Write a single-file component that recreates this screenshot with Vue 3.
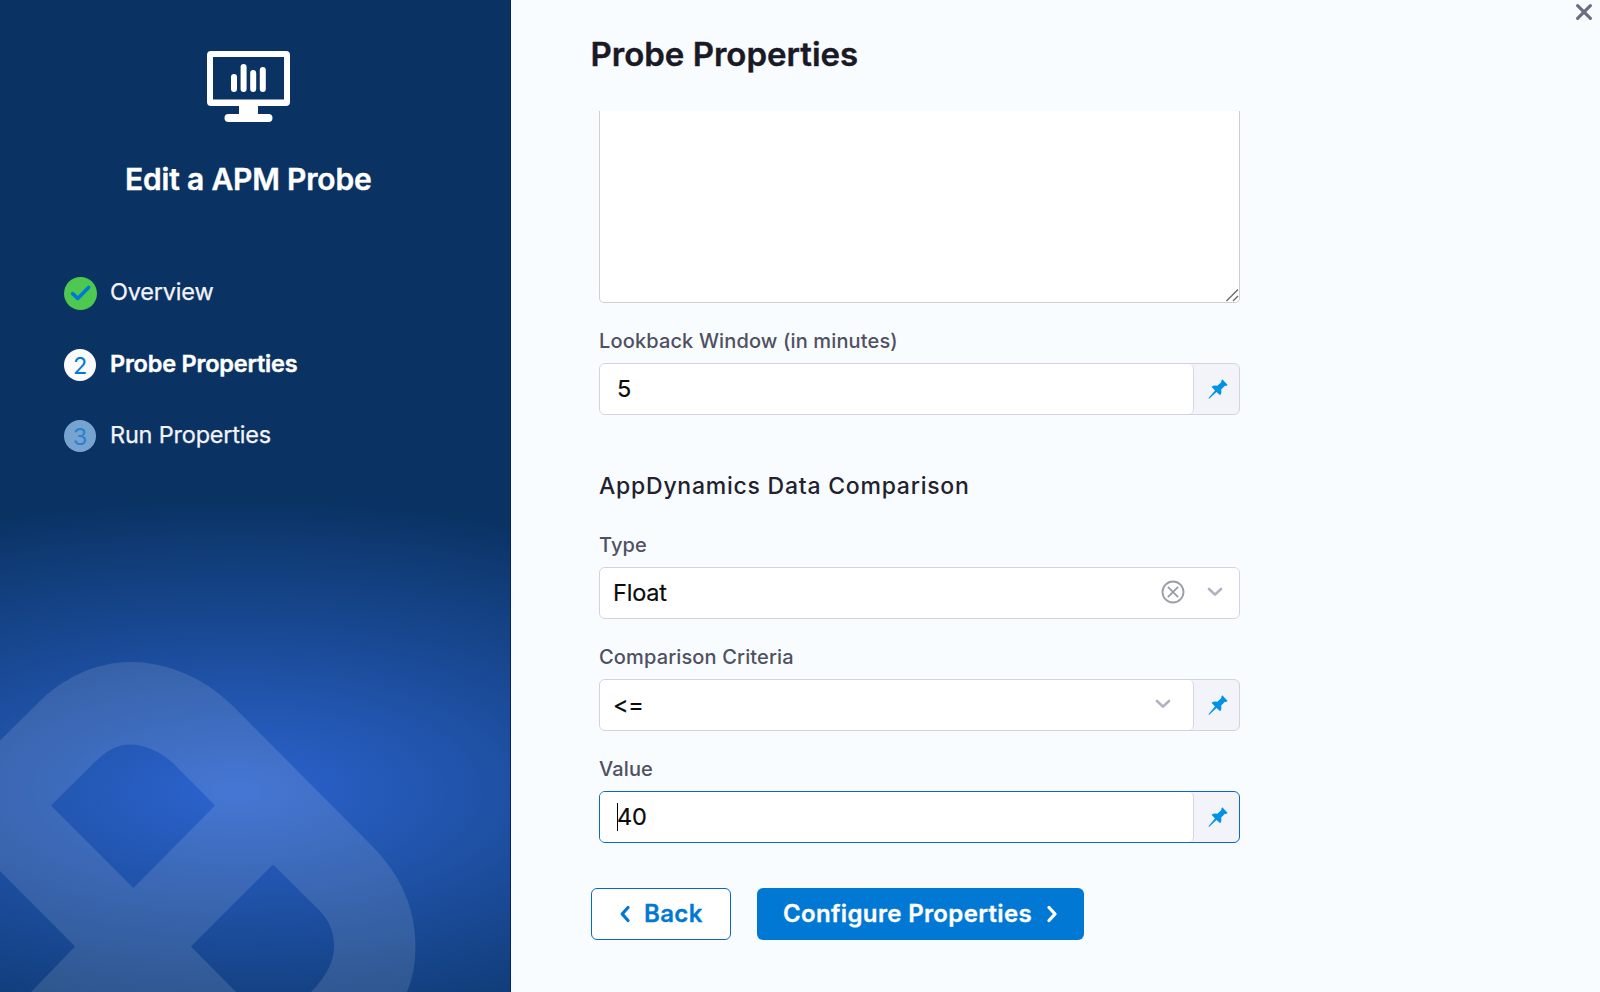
<script setup>
const steps = [
  { n: 1, label: 'Overview', state: 'done' },
  { n: 2, label: 'Probe Properties', state: 'active' },
  { n: 3, label: 'Run Properties', state: 'todo' },
]
const fields = [
  { id: 'lookback', label: 'Lookback Window (in minutes)', value: '5', pin: true },
  { id: 'type', label: 'Type', value: 'Float', select: true, clear: true, heading: 'AppDynamics Data Comparison' },
  { id: 'criteria', label: 'Comparison Criteria', value: '<=', select: true, pin: true },
  { id: 'value', label: 'Value', value: '40', pin: true, focus: true },
]
</script>

<template>
  <div class="dialog">
    <aside class="side">
      <svg class="mark" viewBox="0 0 511 350" width="511" height="350">
        <path
          fill="#fff"
          fill-opacity="0.12"
          fill-rule="evenodd"
          d="M0 98.500L36 63C64 34 98 20 130 20C164 20 201 33 233 64L374 206C402 235 415.500 268 415.500 304Q415.500 330 407 350H311C325 336 334 321 334 304C334 289 329 277 316 265L273 222.500L191 304.500L236 350H31L75 304.500L0 229ZM51 163.500L94 121C106 109 117 102.500 130 102.500C144 102.500 160 109 174 122L215 163.500L133.500 246Z"
        />
      </svg>
      <svg class="monitor" viewBox="0 0 84 72" width="84" height="72" fill="#fff">
        <path fill-rule="evenodd" d="M4 0H79Q83 0 83 4V51Q83 55 79 55H51V63H61.500A4 4 0 0 1 61.500 71H21.500A4 4 0 0 1 21.500 63H32V55H4Q0 55 0 51V4Q0 0 4 0ZM6 6V48.500H77V6Z" />
        <g stroke="#fff" stroke-width="6" stroke-linecap="round">
          <path d="M27 26V38M36.600 16V38M46.200 22V38M55.800 19V38" />
        </g>
      </svg>
      <h2 class="side-title">Edit a APM Probe</h2>
      <ol class="steps">
        <li v-for="s in steps" :key="s.n" :class="['step', s.state]">
          <span class="bullet">
            <svg v-if="s.state === 'done'" viewBox="0 0 33 33" width="33" height="33">
              <path d="M8.600 16.600L13.800 21.400L24.600 10.400" fill="none" stroke="#0278d5" stroke-width="3.600" stroke-linecap="round" stroke-linejoin="round" />
            </svg>
            <template v-else>{{ s.n }}</template>
          </span>
          <span class="step-label">{{ s.label }}</span>
        </li>
      </ol>
    </aside>

    <main class="main">
      <svg class="close" viewBox="0 0 18 18" width="18" height="18">
        <path d="M2.600 2.600L15.400 15.400M15.400 2.600L2.600 15.400" stroke="#6b6d85" stroke-width="3.200" stroke-linecap="round" />
      </svg>
      <h1 class="title">Probe Properties</h1>
      <div class="form">
        <div class="textarea">
          <svg viewBox="0 0 14 14" width="14" height="14">
            <path d="M1.500 13L13 1.500M8 13L13 8" stroke="#666" stroke-width="1.300" />
          </svg>
        </div>
        <template v-for="f in fields" :key="f.id">
          <h3 v-if="f.heading" class="section">{{ f.heading }}</h3>
          <div class="field">
            <div class="label">{{ f.label }}</div>
            <div class="control" :class="{ focus: f.focus }">
              <div class="box" :class="{ select: f.select, pinned: f.pin }">
                <span v-if="f.focus" class="caret"></span>
                <span class="val">{{ f.value }}</span>
                <svg v-if="f.clear" class="clear" viewBox="0 0 24 24" width="24" height="24" fill="none" stroke="#989eab" stroke-width="1.900" stroke-linecap="round">
                  <circle cx="12" cy="12" r="10.500" />
                  <path d="M7.400 7.400L16.600 16.600M16.600 7.400L7.400 16.600" />
                </svg>
                <svg v-if="f.select" class="chev" viewBox="0 0 16 10" width="16" height="10">
                  <path d="M2 2L8 7.600L14 2" fill="none" stroke="#b0b1c3" stroke-width="2.600" stroke-linecap="round" stroke-linejoin="round" />
                </svg>
              </div>
              <div v-if="f.pin" class="pin">
                <svg viewBox="0 0 20 20" width="20" height="20" fill="#0092e4">
                  <path d="M14.300 0.300L19.700 5.900Q18.200 7.200 16.900 6.800L13.200 10.600Q14 13.800 12.200 16.300L8.500 12.900L1.200 19.700L0.400 19.200L7 11.500L3.500 7.800Q6 6 9.300 6.800L13.200 3.200Q12.900 1.600 14.300 0.300Z" />
                </svg>
              </div>
            </div>
          </div>
        </template>
      </div>
      <div class="actions">
        <button class="btn back">
          <svg viewBox="0 0 12 18" width="12" height="18"><path d="M9 2.500L3.200 9L9 15.500" fill="none" stroke="#0278d5" stroke-width="3.300" stroke-linecap="round" stroke-linejoin="round" /></svg>
          <span>Back</span>
        </button>
        <button class="btn next">
          <span>Configure Properties</span>
          <svg viewBox="0 0 12 18" width="12" height="18"><path d="M3 2.500L9 9L3 15.500" fill="none" stroke="#fff" stroke-width="3.300" stroke-linecap="round" stroke-linejoin="round" /></svg>
        </button>
      </div>
    </main>
  </div>
</template>

<style>
body { margin: 0; background: #f9fcff; }
</style>

<style scoped>
* { box-sizing: border-box; }
.dialog {
  display: flex;
  width: 1600px;
  height: 992px;
  overflow: hidden;
  font-family: Inter, "Liberation Sans", sans-serif;
  background: #f9fcff;
}
.side {
  position: relative;
  width: 511px;
  flex: none;
  padding-top: 51px;
  background: radial-gradient(ellipse 670px 291px at 236px 791px, #2c64cf, #0a3364) #0a3364;
  border-right: 1px solid #02236b;
}
.mark { position: absolute; left: 0; bottom: 0; }
.monitor { display: block; margin-left: 207px; }
.side-title {
  margin: 38px 0 0 125px;
  font-size: 30px;
  line-height: 36px;
  font-weight: 600;
  letter-spacing: -0.180px;
  -webkit-text-stroke: 0.400px #fff;
  color: #fff;
  white-space: nowrap;
}
.steps { position: relative; list-style: none; margin: 79px 0 0 64px; padding: 0; }
.step {
  display: flex;
  align-items: center;
  height: 33px;
  margin-bottom: 38.500px;
  color: #f3f3fa;
  font-size: 23.500px;
  letter-spacing: -0.200px;
}
.bullet {
  width: 32px;
  height: 32px;
  margin-top: 1.500px;
  border-radius: 50%;
  display: flex;
  align-items: center;
  justify-content: center;
  background: #fafbfc;
  color: #0278d5;
  padding-top: 1px;
}
.done .bullet { width: 33px; height: 33px; background: #4dc952; padding: 0; }
.todo .bullet { background: #76a3cf; color: #2b80cf; }
.step-label { margin: 0 0 1.500px 14px; white-space: nowrap; -webkit-text-stroke: 0.250px currentColor; }
.done .step-label { margin-left: 13px; }
.active .step-label { font-weight: 600; color: #fff; -webkit-text-stroke-width: 0.400px; }
.main { position: relative; flex: 1; padding: 35px 0 0 79px; }
.close { position: absolute; left: 1063.500px; top: 3px; }
.title {
  margin: 0 0 0 0.500px;
  font-size: 33px;
  line-height: 39px;
  font-weight: 600;
  color: #1a1a26;
  -webkit-text-stroke: 0.400px #1a1a26;
  white-space: nowrap;
}
.form { margin: 37px 0 0 9px; width: 640.500px; }
.textarea {
  height: 192px;
  display: flex;
  justify-content: flex-end;
  align-items: flex-end;
  background: #fff;
  border: 1.500px solid #cfcfd3;
  border-top: 0;
  border-radius: 0 0 5px 5px;
}
.field { padding-top: 24px; }
.section {
  margin: 56px 0 4px;
  font-size: 23px;
  line-height: 31px;
  padding-bottom: 1px;
  font-weight: 500;
  letter-spacing: 0.760px;
  color: #22222f;
  white-space: nowrap;
}
.label { font-size: 20px; line-height: 28px; font-weight: 500; letter-spacing: 0.140px; color: #4f5162; margin-bottom: 8px; white-space: nowrap; }
.control {
  display: flex;
  height: 52px;
  border: 1px solid #d2d2e0;
  border-radius: 6px;
  background: #f3f3fa;
  overflow: hidden;
}
.control.focus { border-color: #0b66cf; }
.box {
  position: relative;
  flex: 1;
  display: flex;
  align-items: center;
  padding-left: 17px;
  background: #fff;
  font-size: 23.500px;
  color: #0b0b0d;
}
.box.select { padding-left: 13px; }
.box.pinned { border-right: 1px solid #d5d6e3; border-radius: 0 5px 5px 0; }
.val { flex: 1; padding-bottom: 2px; white-space: nowrap; letter-spacing: -0.200px; -webkit-text-stroke: 0.200px currentColor; }
.caret { position: absolute; left: 17px; top: 11px; width: 1px; height: 28px; background: #000; }
.clear { margin: 0 22.500px 3px 0; }
.chev { margin: 0 15.500px 3px 0; }
.pinned .chev { margin-right: 21.500px; }
.pin { width: 45px; display: flex; align-items: center; justify-content: center; padding-left: 4px; }
.actions { display: flex; gap: 26px; margin-top: 44.500px; }
.btn {
  display: flex;
  align-items: center;
  height: 52px;
  padding: 0;
  border-radius: 6px;
  font: 600 24px Inter, "Liberation Sans", sans-serif;
  letter-spacing: 0.350px;
  -webkit-text-stroke: 0.300px currentColor;
  white-space: nowrap;
}
.back { width: 140px; margin-left: 1px; padding-left: 27px; gap: 13px; background: #fff; color: #0278d5; border: 1.500px solid #0b66c8; }
.next { width: 327px; padding-left: 26px; gap: 14px; background: #0278d5; color: #fff; border: 0; }
</style>
